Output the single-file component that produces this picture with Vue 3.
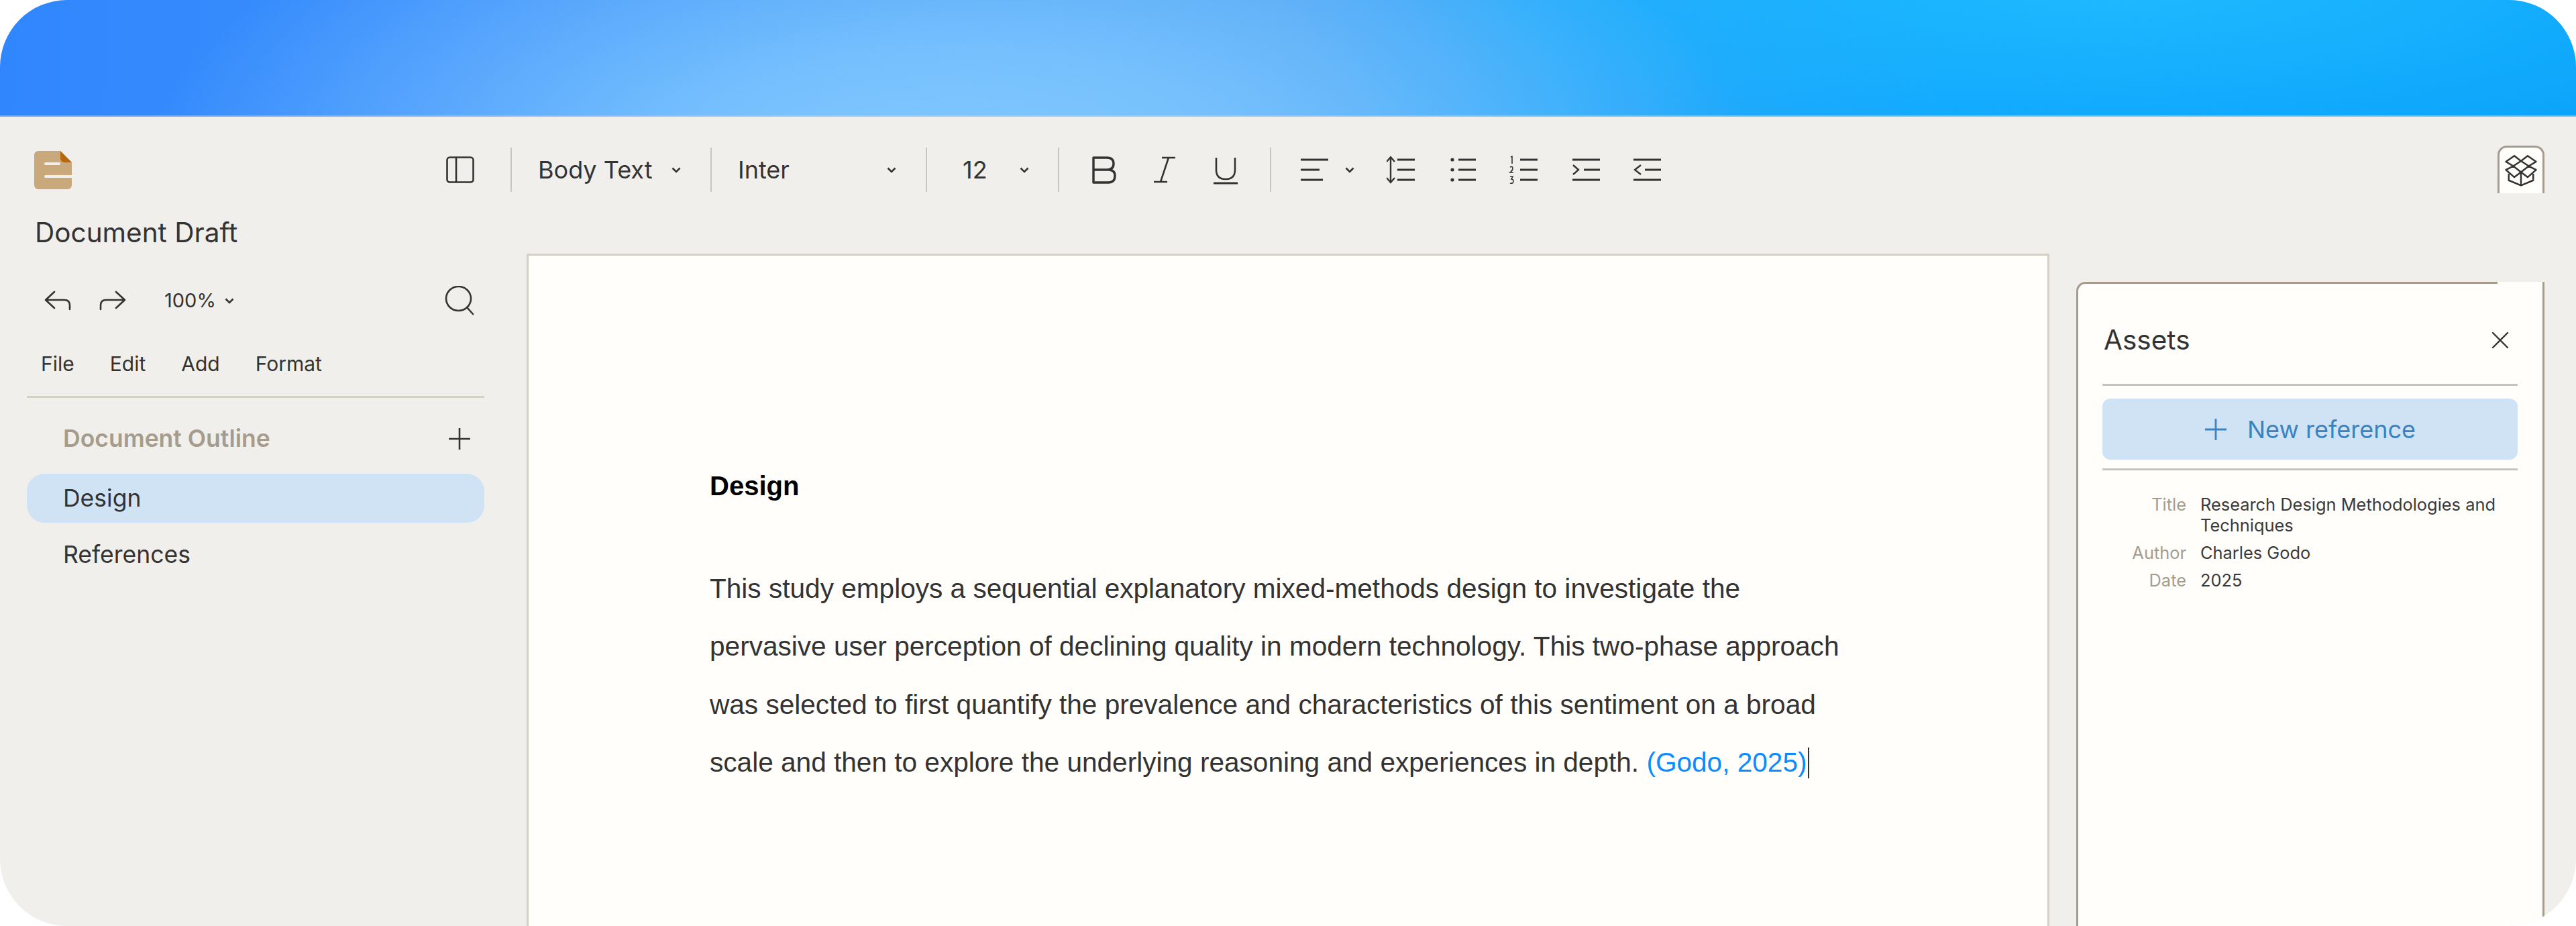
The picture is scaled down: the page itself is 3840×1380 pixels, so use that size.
<script setup>
const outline = [
  { label: 'Design', active: true },
  { label: 'References', active: false },
]
const menus = ['File', 'Edit', 'Add', 'Format']
const meta = [
  { key: 'Title', value: 'Research Design Methodologies and Techniques' },
  { key: 'Author', value: 'Charles Godo' },
  { key: 'Date', value: '2025' },
]
const bodyLines = [
  'This study employs a sequential explanatory mixed-methods design to investigate the',
  'pervasive user perception of declining quality in modern technology. This two-phase approach',
  'was selected to first quantify the prevalence and characteristics of this sentiment on a broad',
]
</script>

<template>
  <div class="app">
    <header class="hero"></header>
    <div class="workspace">
      <aside class="sidebar">
        <div class="brand-row">
          <svg class="logo" width="56" height="57" viewBox="0 0 56 57">
            <path d="M6 0H39L56 17V51a6 6 0 0 1-6 6H6a6 6 0 0 1-6-6V6a6 6 0 0 1 6-6Z" fill="#c9a97c" />
            <path d="M39 0L56 17H45a6 6 0 0 1-6-6Z" fill="#b8680c" />
            <rect x="15" y="17" width="24" height="4" rx="2" fill="#f0efec" />
            <path d="M17 36H56V40H17a2 2 0 0 1 0-4Z" fill="#f0efec" />
          </svg>
          <svg width="42" height="40" viewBox="0 0 42 40" fill="none" stroke="#333" stroke-width="2.6">
            <rect x="1.5" y="1.5" width="39" height="37" rx="4" />
            <path d="M15 1.5V38.5" />
          </svg>
        </div>
        <h1 class="doc-title">Document Draft</h1>
        <div class="history-row">
          <svg width="40" height="30" viewBox="0 0 40 30" fill="none" stroke="#333" stroke-width="2.6" stroke-linecap="round" stroke-linejoin="round">
            <path d="M15 2L2 14L15 26M2 14H30Q38 14 38 22V28" />
          </svg>
          <svg class="redo" width="40" height="30" viewBox="0 0 40 30" fill="none" stroke="#333" stroke-width="2.6" stroke-linecap="round" stroke-linejoin="round">
            <path d="M25 2L38 14L25 26M38 14H10Q2 14 2 22V28" />
          </svg>
          <span class="zoom-value">100%</span>
          <svg class="chev zoom-chev" width="14" height="9" viewBox="0 0 14 9" fill="none" stroke="#333" stroke-width="2.6"><path d="M1.5 1.5L7 7L12.5 1.5" /></svg>
          <svg class="search" width="44" height="44" viewBox="0 0 44 44" fill="none" stroke="#333" stroke-width="2.6" stroke-linecap="round">
            <ellipse cx="20.5" cy="19" rx="18.5" ry="18" />
            <path d="M33 32L42 42" />
          </svg>
        </div>
        <nav class="menu">
          <span v-for="m in menus" :key="m">{{ m }}</span>
        </nav>
        <div class="outline-head">
          <span>Document Outline</span>
          <svg width="34" height="34" viewBox="0 0 34 34" stroke="#333" stroke-width="2.6"><path d="M17 1V33M1 17H33" /></svg>
        </div>
        <div class="outline-list">
          <div v-for="o in outline" :key="o.label" class="outline-item" :class="{ active: o.active }">{{ o.label }}</div>
        </div>
      </aside>

      <main class="content">
        <div class="toolbar">
          <i class="sep"></i>
          <div class="select select-style">
            <span>Body Text</span>
            <svg class="chev" width="14" height="9" viewBox="0 0 14 9" fill="none" stroke="#333" stroke-width="2.6"><path d="M1.5 1.5L7 7L12.5 1.5" /></svg>
          </div>
          <i class="sep"></i>
          <div class="select select-font">
            <span>Inter</span>
            <svg class="chev" width="14" height="9" viewBox="0 0 14 9" fill="none" stroke="#333" stroke-width="2.6"><path d="M1.5 1.5L7 7L12.5 1.5" /></svg>
          </div>
          <i class="sep"></i>
          <div class="select select-size">
            <span>12</span>
            <svg class="chev" width="14" height="9" viewBox="0 0 14 9" fill="none" stroke="#333" stroke-width="2.6"><path d="M1.5 1.5L7 7L12.5 1.5" /></svg>
          </div>
          <i class="sep"></i>
          <div class="tool-group">
            <svg class="tool" viewBox="0 0 48 48" fill="none" stroke="#333" stroke-width="3.4" stroke-linejoin="round">
              <path d="M9 6H29Q39 6 39 15Q39 24 29 24H9ZM9 24H31Q41 24 41 33Q41 43 31 43H9Z" />
            </svg>
            <svg class="tool" viewBox="0 0 48 48" fill="none" stroke="#333" stroke-width="2.6">
              <path d="M20 6H40M8 42H28M30 6L18 42" />
            </svg>
            <svg class="tool" viewBox="0 0 48 48" fill="none" stroke="#333" stroke-width="2.6">
              <path d="M10 6V24Q10 38 24 38Q38 38 38 24V6" />
              <path stroke-width="3.2" d="M6 44H42" />
            </svg>
          </div>
          <i class="sep"></i>
          <div class="tool-group tool-group-last">
            <div class="align-tool">
              <svg class="tool" viewBox="0 0 48 48" fill="none" stroke="#333" stroke-width="3.2">
                <path d="M4 9H45M4 24H32M4 39H37" />
              </svg>
              <svg class="chev" width="14" height="9" viewBox="0 0 14 9" fill="none" stroke="#333" stroke-width="2.6"><path d="M1.5 1.5L7 7L12.5 1.5" /></svg>
            </div>
            <svg class="tool" viewBox="0 0 48 48" fill="none" stroke="#333" stroke-width="3.2">
              <path stroke-width="2.4" d="M6 6V42M0 12L6 5L12 12M0 36L6 43L12 36" />
              <path d="M16 9H42M16 24H42M16 39H42" />
            </svg>
            <svg class="tool" viewBox="0 0 48 48" fill="none" stroke="#333" stroke-width="3.2">
              <circle cx="7" cy="9" r="2.6" fill="#333" stroke="none" />
              <circle cx="7" cy="24" r="2.6" fill="#333" stroke="none" />
              <circle cx="7" cy="39" r="2.6" fill="#333" stroke="none" />
              <path d="M16 9H42M16 24H42M16 39H42" />
            </svg>
            <svg class="tool" viewBox="0 0 48 48" fill="none" stroke="#333" stroke-width="3.2">
              <path stroke-width="1.6" d="M3 5L5 4V15M2 20Q6 18 6 22Q6 25 2 28H7M2 34H6L4 38Q7 38 7 41Q7 45 2 44" />
              <path d="M17 9H43M17 24H43M17 39H43" />
            </svg>
            <svg class="tool" viewBox="0 0 48 48" fill="none" stroke="#333" stroke-width="3.2">
              <path d="M4 9H45M4 39H45M21 24H45" />
              <path stroke-width="2.4" d="M5 17L13 24L5 31" />
            </svg>
            <svg class="tool" viewBox="0 0 48 48" fill="none" stroke="#333" stroke-width="3.2">
              <path d="M4 9H45M4 39H45M21 24H45" />
              <path stroke-width="2.4" d="M15 17L6 24L15 31" />
            </svg>
          </div>
          <div class="assets-tab">
            <svg width="50" height="48" viewBox="40 55 150 145" fill="none" stroke="#333" stroke-width="7.5" stroke-linejoin="round">
              <path d="M85 62L115 85L80 108L47 88Z" />
              <path d="M145 62L115 85L150 108L183 88Z" />
              <path d="M80 108L115 135L85 158L47 125Z" />
              <path d="M150 108L115 135L145 158L183 125Z" />
              <path d="M60 142V172L115 195L170 172V142M115 135V195" />
            </svg>
          </div>
        </div>
        <div class="stage">
          <article class="page">
            <h2 class="page-heading">Design</h2>
            <div class="page-body">
              <div v-for="line in bodyLines" :key="line" class="page-line">{{ line }}</div>
              <div class="page-line"><span>scale and then to explore the underlying reasoning and experiences in depth. </span><span class="cite">(Godo, 2025)</span><span class="caret"></span></div>
            </div>
          </article>
          <section class="assets">
            <div class="assets-head">
              <span>Assets</span>
              <svg width="26" height="26" viewBox="0 0 26 26" stroke="#333" stroke-width="2.4" stroke-linecap="round"><path d="M2 2L24 24M24 2L2 24" /></svg>
            </div>
            <button class="new-ref" type="button">
              <svg width="34" height="34" viewBox="0 0 34 34" stroke="#3b82c0" stroke-width="2.8"><path d="M17 1V33M1 17H33" /></svg>
              <span>New reference</span>
            </button>
            <dl class="meta">
              <template v-for="row in meta" :key="row.key">
                <dt>{{ row.key }}</dt>
                <dd>{{ row.value }}</dd>
              </template>
            </dl>
          </section>
        </div>
      </main>
    </div>
  </div>
</template>

<style>
html, body { margin: 0; background: #fff; }
</style>

<style scoped>
.app {
  width: 3840px;
  height: 1380px;
  border-radius: 100px;
  overflow: hidden;
  background: #f0efec;
  display: flex;
  flex-direction: column;
  font-family: Inter, "Noto Sans", sans-serif;
  color: #333;
}
.hero {
  height: 174px;
  flex: none;
  box-sizing: border-box;
  border-bottom: 2px solid rgba(255, 255, 255, 0.35);
  background:
    radial-gradient(ellipse 1200px 480px at 1420px 240px, rgba(128, 200, 255, 1) 0%, rgba(128, 200, 255, 0.82) 35%, rgba(128, 200, 255, 0) 100%),
    radial-gradient(ellipse 1100px 240px at 3150px -20px, rgba(30, 185, 255, 1) 0%, rgba(30, 185, 255, 0) 100%),
    linear-gradient(92deg, #3086fd 0, #3c8ffc 700px, #4a9ff2 1900px, #2aa8fa 2300px, #10a7fd 2900px, #0ba4fb 3840px);
}
.workspace { flex: 1; display: flex; min-height: 0; }

.sidebar {
  width: 761px;
  flex: none;
  box-sizing: border-box;
  padding: 46px 39px 0 40px;
}
.brand-row {
  height: 66px;
  display: flex;
  align-items: center;
  justify-content: space-between;
  padding: 0 15px 0 11px;
}
.doc-title {
  margin: 37px 0 0;
  padding-left: 12px;
  font-size: 40.5px;
  line-height: 48px;
  font-weight: 400;
}
.history-row {
  margin-top: 53px;
  height: 48px;
  display: flex;
  align-items: center;
  padding: 0 15px 0 26px;
}
.redo { margin-left: 42px; }
.zoom-value { margin-left: 57px; font-size: 29px; line-height: 40px; }
.zoom-chev { margin-left: 13px; }
.search { margin-left: auto; }
.menu {
  margin-top: 50px;
  height: 40px;
  display: flex;
  gap: 53px;
  padding-left: 21px;
  font-size: 30px;
  line-height: 40px;
}
.outline-head {
  margin-top: 28px;
  border-top: 3px solid #d5d1c6;
  padding: 39px 20px 0 54px;
  display: flex;
  align-items: center;
  justify-content: space-between;
  font-size: 35.5px;
  line-height: 44px;
  font-weight: 600;
  color: #a59c8d;
}
.outline-list {
  margin-top: 30px;
  display: flex;
  flex-direction: column;
  gap: 11px;
}
.outline-item {
  height: 73px;
  padding-left: 54px;
  border-radius: 26px;
  font-size: 35.5px;
  line-height: 73px;
}
.outline-item.active { background: #d0e3f5; }

.content { flex: 1; min-width: 0; display: flex; flex-direction: column; }
.toolbar {
  height: 204px;
  flex: none;
  box-sizing: border-box;
  padding-top: 43px;
  display: flex;
  align-items: flex-start;
  font-size: 36px;
}
.sep {
  flex: none;
  width: 2px;
  height: 66px;
  margin-top: 3px;
  background: #c6c5c2;
}
.select {
  flex: none;
  box-sizing: border-box;
  height: 72px;
  display: flex;
  align-items: center;
  line-height: 44px;
}
.select-style { width: 296px; padding-left: 39px; }
.select-style .chev { margin-left: 29px; }
.select-font { width: 319px; padding-left: 39px; }
.select-font .chev { margin-left: 145px; }
.select-size { width: 195px; padding-left: 53px; }
.select-size .chev { margin-left: 48px; }
.tool-group {
  flex: none;
  box-sizing: border-box;
  height: 72px;
  display: flex;
  align-items: center;
  gap: 43px;
  padding: 0 42px;
}
.tool-group-last { padding: 0 0 0 40px; }
.tool { width: 48px; height: 48px; flex: none; }
.align-tool { display: flex; align-items: center; gap: 22px; margin-right: 5px; }
.assets-tab {
  margin-left: auto;
  margin-right: 47px;
  width: 70px;
  height: 71px;
  box-sizing: border-box;
  border: 3px solid #a59c8d;
  border-bottom: none;
  border-radius: 14px 14px 0 0;
  background: #fffefb;
  display: flex;
  align-items: center;
  justify-content: center;
}

.stage { flex: 1; min-height: 0; display: flex; padding-left: 24px; }
.page {
  width: 2270px;
  flex: none;
  box-sizing: border-box;
  border: 3px solid #d3cfc4;
  border-bottom: none;
  background: #fffefb;
  padding: 320px 0 0 270px;
  font-family: "Liberation Sans", Arial, sans-serif;
  font-size: 40.6px;
}
.page-heading {
  margin: 0;
  font-size: 40px;
  line-height: 46px;
  font-weight: 700;
  color: #000;
}
.page-body {
  margin: 87px 0 0;
  line-height: 86.4px;
  color: #333;
}
.page-line { white-space: pre; }
.cite { color: #0a8cff; }
.caret {
  display: inline-block;
  width: 2px;
  height: 46px;
  margin-left: 1px;
  vertical-align: -10px;
  background: #333;
}
.assets {
  position: relative;
  margin: 42px 0 0 40px;
  width: 698px;
  flex: none;
  box-sizing: border-box;
  border: 3px solid #a59c8d;
  border-bottom: none;
  border-radius: 14px 0 0 0;
  background: #fffefb;
  padding: 60px 37px 0 36px;
}
.assets::after {
  content: "";
  position: absolute;
  top: -3px;
  right: 0;
  width: 67px;
  height: 3px;
  background: #fffefb;
}
.assets-head {
  height: 48px;
  display: flex;
  align-items: center;
  justify-content: space-between;
  padding: 0 13px 41px 2px;
  font-size: 40.5px;
  line-height: 48px;
  box-sizing: content-box;
  border-bottom: 3px solid #c4c3bf;
}
.new-ref {
  margin: 19px 0 13px;
  width: 100%;
  height: 91px;
  border: none;
  border-radius: 12px;
  background: #d0e3f5;
  color: #3b82c0;
  font: 400 36px/44px Inter, "Noto Sans", sans-serif;
  display: flex;
  align-items: center;
  justify-content: center;
  gap: 30px;
}
.meta {
  margin: 0;
  border-top: 3px solid #c4c3bf;
  padding-top: 35px;
  display: grid;
  grid-template-columns: 125px 1fr;
  column-gap: 21px;
  row-gap: 10px;
  font-size: 25.4px;
  line-height: 31px;
}
.meta dt { text-align: right; color: #a59c8d; }
.meta dd { margin: 0; color: #3a3a3a; }
</style>
